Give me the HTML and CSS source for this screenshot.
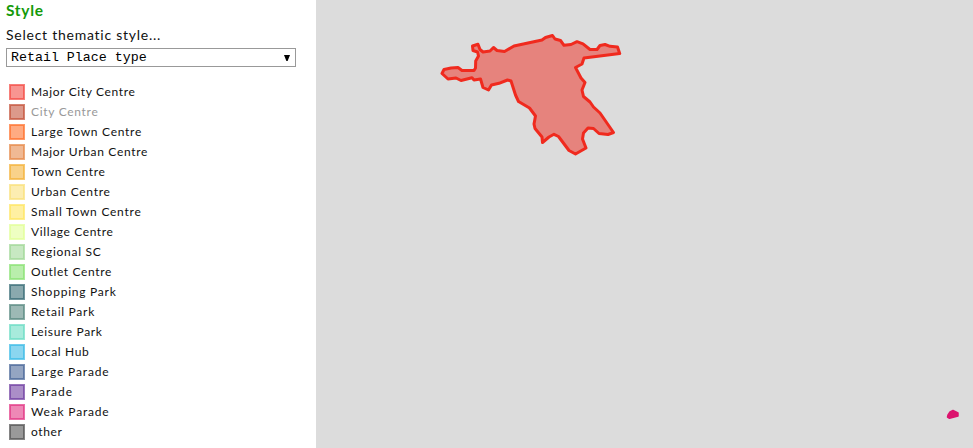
FILE: index.html
```html
<!DOCTYPE html>
<html lang="en">
<head>
<meta charset="utf-8">
<title>Retail places</title>
<link rel="stylesheet" href="styles.css">
</head>
<body>
<div class="app">
  <aside class="panel">
    <h1 class="title">Style</h1>
    <div class="prompt">Select thematic style...</div>
    <div class="select"><span>Retail Place type</span><svg class="arrow" width="6" height="6" viewBox="0 0 6 6"><path d="M0 0H6L3.6 6H2.4Z"/></svg></div>
    <ul class="legend" id="legend"></ul>
  </aside>
  <main class="map">
    <svg width="657" height="448" viewBox="316 0 657 448">
      <path class="city" d="M442 73.5L444 69.5L451 68L458 67.5L462 70.5L474 70.5L475.5 68L475.7 61L478.5 56L477.5 52L473 50.5L472.5 46L478 44.3L480 49.5L483 52L490 51L493.5 47.5L497 50.5L504.5 51.5L514 46L542 40L545.5 37.5L552.5 35.5L555 39L560.5 40.5L564 45.3L571 44.5L577 41.7L583 43.8L590 49.5L597 49.5L600 45.5L605 44.5L610 46.3L617.5 47L619.7 53.5L584 58L582 64L575.5 67.5L581 78L585 82.5L582 90L583.5 96.5L590 102L593.5 107L600 113L613.5 132.5L608 134.5L599 133.5L593.5 128.5L588 128L583.5 133L582.5 139L586 148L575.5 154L569 150.5L558.5 136.5L554 134.3L549 137L542.5 142.5L542 137L535 128.5L534 124L535.5 116L529.5 108L518.5 101.5L515.5 95L511 81L507.5 80L499 83.3L491.5 85L488.5 90L483 87.5L480.5 79L474 80L472 77.8L461 80.5L456 78L448 79Z"/>
      <path class="weak" d="M948 415L950 412L953 410.5L958 413L958 416L949.5 418.3L947.5 417Z"/>
    </svg>
  </main>
</div>
<script src="legend.js"></script>
</body>
</html>
```
FILE: styles.css
```css
body { margin: 0; background: #fff; color: #111; font-family: Lato, sans-serif; }
.app { display: flex; height: 448px; overflow: hidden; }
.panel { box-sizing: border-box; width: 316px; padding: 0 20px 0 6px; flex: none; }
.title { margin: 0; height: 22px; font-size: 15.5px; line-height: 21px; font-weight: 700; color: #149a0a; letter-spacing: .7px; }
.prompt { height: 26px; font-size: 14px; line-height: 26px; letter-spacing: .75px; white-space: nowrap; }
.select { box-sizing: border-box; height: 19px; border: 1px solid #999; padding: 0 5px 0 4px; display: flex; align-items: center; justify-content: space-between; font: 13.3px/17px "Liberation Mono", monospace; color: #000; }
.arrow { display: block; }
.legend { list-style: none; margin: 15px 0 0; padding: 0 0 0 3px; }
.legend li { display: flex; align-items: center; gap: 6px; height: 20px; font-size: 12px; line-height: 20px; white-space: nowrap; }
.swatch { display: block; flex: none; }
.swatch rect { fill: currentColor; stroke: currentColor; fill-opacity: .58; stroke-opacity: .7; stroke-width: 2; }
.muted span { color: #999; }
.map { flex: 1; background: #dcdcdc; }
.map svg { display: block; }
.city { fill: #f02a1e; fill-opacity: .5; stroke: #f02a1e; stroke-width: 3; stroke-linejoin: round; }
.weak { fill: #dc146e; stroke: #dc146e; stroke-width: 1.5; stroke-linejoin: round; }
```
FILE: legend.js
```js
const items = [
  ["Major City Centre", "#f34842", 104.5],
  ["City Centre", "#c35037", 67.5],
  ["Large Town Centre", "#ff6e28", 111],
  ["Major Urban Centre", "#e68746", 117],
  ["Town Centre", "#f4b136", 74.5],
  ["Urban Centre", "#fae078", 79.5],
  ["Small Town Centre", "#ffe65f", 110.5],
  ["Village Centre", "#e1ff96", 82.5],
  ["Regional SC", "#9fd796", 70.5],
  ["Outlet Centre", "#87e170", 81],
  ["Shopping Park", "#356a73", 85.5],
  ["Retail Park", "#56877f", 64],
  ["Leisure Park", "#69dcc3", 71.5],
  ["Local Hub", "#37b9e6", 58.5],
  ["Large Parade", "#466496", 78.5],
  ["Parade", "#6e3ca0", 42],
  ["Weak Parade", "#e13282", 78.5],
  ["other", "#505050", 31.5]
];
const list = document.getElementById("legend");
for (const [name, color, width] of items) {
  const li = document.createElement("li");
  if (name === "City Centre") li.className = "muted";
  li.innerHTML = `<svg class="swatch" style="color:${color}" width="16" height="16"><rect x="1" y="1" width="14" height="14"/></svg><span>${name}</span>`;
  list.append(li);
  const label = li.lastElementChild;
  const extra = (width - label.getBoundingClientRect().width) / name.length;
  label.style.letterSpacing = `${extra}px`;
}
```
